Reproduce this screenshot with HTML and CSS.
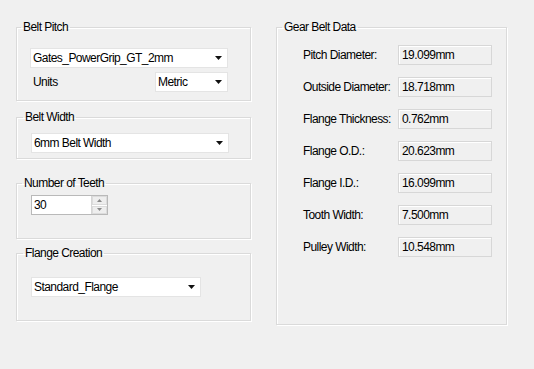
FILE: index.html
```html
<!DOCTYPE html>
<html lang="en">

<head>
    <meta charset="UTF-8">
    <meta name="viewport" content="width=device-width, initial-scale=1.0">
    <title>Gear Belt</title>
    <link rel="stylesheet" href="styles.css">
</head>

<body>
    <div class="window">
        <div class="leftcol">
            <fieldset class="grp pitch">
                <legend>Belt Pitch</legend>
                <div class="combo wide">
                    <span>Gates_PowerGrip_GT_2mm</span>
                    <svg class="arrow" width="7" height="4" viewBox="0 0 7 4"><path d="M0 0H7L3.5 4Z" /></svg>
                </div>
                <div class="unitsrow">
                    <span class="lbl">Units</span>
                    <div class="combo units">
                        <span>Metric</span>
                        <svg class="arrow" width="7" height="4" viewBox="0 0 7 4"><path d="M0 0H7L3.5 4Z" /></svg>
                    </div>
                </div>
            </fieldset>

            <fieldset class="grp width">
                <legend>Belt Width</legend>
                <div class="combo wide">
                    <span>6mm Belt Width</span>
                    <svg class="arrow" width="7" height="4" viewBox="0 0 7 4"><path d="M0 0H7L3.5 4Z" /></svg>
                </div>
            </fieldset>

            <fieldset class="grp teeth">
                <legend>Number of Teeth</legend>
                <div class="spin">
                    <span>30</span>
                    <div class="spinbtns">
                        <div class="sb"><svg width="5" height="3" viewBox="0 0 5 3"><path d="M2.5 0L5 3H0Z" /></svg></div>
                        <div class="sb"><svg width="5" height="3" viewBox="0 0 5 3"><path d="M0 0H5L2.5 3Z" /></svg></div>
                    </div>
                </div>
            </fieldset>

            <fieldset class="grp flange">
                <legend>Flange Creation</legend>
                <div class="combo mid">
                    <span>Standard_Flange</span>
                    <svg class="arrow" width="7" height="4" viewBox="0 0 7 4"><path d="M0 0H7L3.5 4Z" /></svg>
                </div>
            </fieldset>
        </div>

        <fieldset class="grp data">
            <legend>Gear Belt Data</legend>
            <div class="row"><span class="dl">Pitch Diameter:</span><span class="val">19.099mm</span></div>
            <div class="row"><span class="dl">Outside Diameter:</span><span class="val">18.718mm</span></div>
            <div class="row"><span class="dl">Flange Thickness:</span><span class="val">0.762mm</span></div>
            <div class="row"><span class="dl">Flange O.D.:</span><span class="val">20.623mm</span></div>
            <div class="row"><span class="dl">Flange I.D.:</span><span class="val">16.099mm</span></div>
            <div class="row"><span class="dl">Tooth Width:</span><span class="val">7.500mm</span></div>
            <div class="row"><span class="dl">Pulley Width:</span><span class="val">10.548mm</span></div>
        </fieldset>
    </div>
</body>

</html>
```

FILE: styles.css
```css
body {
    margin: 0px;
    padding: 0px;
    background-color: #f0f0f0;
    font-family: "Liberation Sans", Arial, sans-serif;
    font-size: 12px;
    letter-spacing: -0.55px;
    color: #000;
    white-space: nowrap;
}

.window {
    display: flex;
    gap: 25px;
    padding: 20px 0 0 16px;
    height: 349px;
}

.leftcol {
    display: flex;
    flex-direction: column;
    width: 235px;
}

.grp {
    margin: 0;
    min-width: 0;
    border: 1px solid #dadada;
    box-shadow: inset 1px 1px 0 #fff, 1px 1px 0 #fff;
}

.grp legend {
    padding: 0 2px;
    height: 14px;
    line-height: 14px;
}

.pitch {
    padding: 14px 0 8px 13px;
}

.pitch legend {
    margin-left: -9px;
}

.width {
    margin-top: 9px;
    padding: 9px 0 5px 14px;
}

.width legend,
.flange legend {
    margin-left: -8px;
}

.teeth {
    margin-top: 17px;
    padding: 5px 0 23px 14px;
}

.teeth legend {
    margin-left: -9px;
}

.flange {
    margin-top: 7px;
    padding: 17px 0 23px 14px;
}

.combo {
    display: flex;
    align-items: center;
    justify-content: space-between;
    box-sizing: border-box;
    height: 20px;
    background-color: #fff;
    border: 1px solid #e4e4e4;
    padding: 0 5px 0 2px;
}

.wide {
    width: 198px;
}

.mid {
    width: 170px;
}

.units {
    width: 73px;
}

.arrow path {
    fill: #111;
}

.unitsrow {
    display: flex;
    align-items: center;
    justify-content: space-between;
    margin-top: 4px;
    width: 198px;
}

.lbl {
    padding-left: 3px;
}

.spin {
    display: flex;
    align-items: center;
    justify-content: space-between;
    box-sizing: border-box;
    width: 77px;
    height: 20px;
    background-color: #fff;
    border: 1px solid #b9b9b9;
    padding: 0 0 0 2px;
}

.spinbtns {
    display: flex;
    flex-direction: column;
    gap: 1px;
    width: 15px;
    height: 18px;
    border-left: 1px solid #d6d6d6;
}

.sb {
    flex: 1;
    display: flex;
    align-items: center;
    justify-content: center;
    background-color: #eeeeee;
    border: 1px solid #dcdcdc;
}

.sb path {
    fill: #8a8a8a;
}

.data {
    width: 231px;
    box-sizing: border-box;
    height: 305px;
    padding: 11px 0 0 26px;
    display: flex;
    flex-direction: column;
    gap: 12px;
}

.data legend {
    margin-left: -21px;
}

.row {
    display: flex;
    align-items: center;
    height: 20px;
}

.dl {
    width: 95px;
}

.val {
    box-sizing: border-box;
    width: 94px;
    height: 20px;
    line-height: 18px;
    padding-left: 3px;
    border: 1px solid #d7d7d7;
    box-shadow: inset 1px 1px 0 #fff;
}
```
